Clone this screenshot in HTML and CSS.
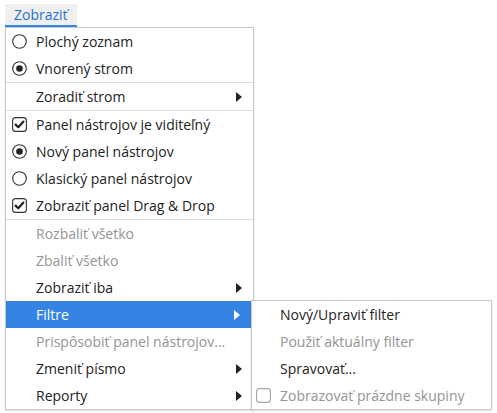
FILE: index.html
```html
<!DOCTYPE html>
<html lang="sk">
<head>
<meta charset="utf-8">
<link rel="stylesheet" href="styles.css">
</head>
<body>
<div class="menubar">
  <div class="menubar-item">Zobraziť</div>
</div>
<div class="menu">
  <div class="item"><span class="ind"><svg width="15" height="15" viewBox="0 0 15 15"><circle cx="7.5" cy="7.5" r="6.8" fill="none" stroke="#333" stroke-width="1.1"/></svg></span><span class="label">Plochý zoznam</span></div>
  <div class="item"><span class="ind"><svg width="15" height="15" viewBox="0 0 15 15"><circle cx="7.5" cy="7.5" r="6.8" fill="none" stroke="#333" stroke-width="1.1"/><circle cx="7.5" cy="7.5" r="3.3" fill="#222"/></svg></span><span class="label">Vnorený strom</span></div>
  <div class="sep"></div>
  <div class="item"><span class="ind"></span><span class="label">Zoradiť strom</span><span class="arrow"></span></div>
  <div class="sep"></div>
  <div class="item"><span class="ind"><svg width="15" height="15" viewBox="0 0 15 15"><rect x="0.6" y="0.6" width="13.8" height="13.8" rx="3" fill="none" stroke="#333" stroke-width="1.1"/><polyline points="3.6,7.6 6.3,10.2 11.4,4.6" fill="none" stroke="#222" stroke-width="2.2" stroke-linejoin="round" stroke-linecap="round"/></svg></span><span class="label">Panel nástrojov je viditeľný</span></div>
  <div class="item"><span class="ind"><svg width="15" height="15" viewBox="0 0 15 15"><circle cx="7.5" cy="7.5" r="6.8" fill="none" stroke="#333" stroke-width="1.1"/><circle cx="7.5" cy="7.5" r="3.3" fill="#222"/></svg></span><span class="label">Nový panel nástrojov</span></div>
  <div class="item"><span class="ind"><svg width="15" height="15" viewBox="0 0 15 15"><circle cx="7.5" cy="7.5" r="6.8" fill="none" stroke="#333" stroke-width="1.1"/></svg></span><span class="label">Klasický panel nástrojov</span></div>
  <div class="item"><span class="ind"><svg width="15" height="15" viewBox="0 0 15 15"><rect x="0.6" y="0.6" width="13.8" height="13.8" rx="3" fill="none" stroke="#333" stroke-width="1.1"/><polyline points="3.6,7.6 6.3,10.2 11.4,4.6" fill="none" stroke="#222" stroke-width="2.2" stroke-linejoin="round" stroke-linecap="round"/></svg></span><span class="label">Zobraziť panel Drag &amp; Drop</span></div>
  <div class="sep"></div>
  <div class="item disabled"><span class="ind"></span><span class="label">Rozbaliť všetko</span></div>
  <div class="item disabled"><span class="ind"></span><span class="label">Zbaliť všetko</span></div>
  <div class="item"><span class="ind"></span><span class="label">Zobraziť iba</span><span class="arrow"></span></div>
  <div class="item active"><span class="ind"></span><span class="label">Filtre</span><span class="arrow"></span></div>
  <div class="item disabled"><span class="ind"></span><span class="label">Prispôsobiť panel nástrojov...</span></div>
  <div class="item"><span class="ind"></span><span class="label">Zmeniť písmo</span><span class="arrow"></span></div>
  <div class="item"><span class="ind"></span><span class="label">Reporty</span><span class="arrow"></span></div>
</div>
<div class="menu submenu">
  <div class="item"><span class="ind"></span><span class="label">Nový/Upraviť filter</span></div>
  <div class="item disabled"><span class="ind"></span><span class="label">Použiť aktuálny filter</span></div>
  <div class="item"><span class="ind"></span><span class="label">Spravovať...</span></div>
  <div class="item disabled"><span class="ind"><svg width="15" height="15" viewBox="0 0 15 15"><rect x="0.6" y="0.6" width="13.8" height="13.8" rx="3" fill="none" stroke="#a8a8a8" stroke-width="1.1"/></svg></span><span class="label">Zobrazovať prázdne skupiny</span></div>
</div>
</body>
</html>
```
FILE: styles.css
```css
html, body {
  margin: 0;
  padding: 0;
  background: #ffffff;
}
body {
  font-family: "Open Sans", "Noto Sans", sans-serif;
  font-size: 14px;
  color: #232323;
  width: 497px;
  height: 413px;
  overflow: hidden;
  position: relative;
}
.menubar {
  height: 27px;
  display: flex;
  align-items: flex-end;
  padding-left: 5px;
}
.menubar-item {
  height: 23px;
  width: 72px;
  box-sizing: border-box;
  padding-left: 9px;
  background: #efefef;
  color: #1f6fd6;
  border-bottom: 2px solid #3584e4;
  display: flex;
  align-items: center;
}
.menu {
  margin-left: 5px;
  width: 247px;
  border: 1px solid #c9c9c9;
  background: #ffffff;
  box-shadow: 0 1px 2px rgba(0, 0, 0, 0.12);
}
.item {
  height: 27px;
  display: flex;
  align-items: center;
  padding-left: 6px;
  padding-right: 11px;
}
.ind {
  width: 15px;
  height: 15px;
  margin-right: 9px;
  display: flex;
}
.label {
  flex: 1;
  white-space: nowrap;
}
.arrow {
  width: 0;
  height: 0;
  border-top: 5px solid transparent;
  border-bottom: 5px solid transparent;
  border-left: 6px solid #222;
}
.disabled {
  color: #949494;
}
.active {
  background: #3584e4;
  color: #ffffff;
  margin-right: 2px;
}
.active .arrow {
  border-left-color: #ffffff;
}
.sep {
  height: 1px;
  background: #dcdcdc;
}
.submenu {
  position: absolute;
  left: 251px;
  top: 300px;
  margin-left: 0;
  width: 239px;
}
.submenu .item {
  padding-left: 4px;
}
```
